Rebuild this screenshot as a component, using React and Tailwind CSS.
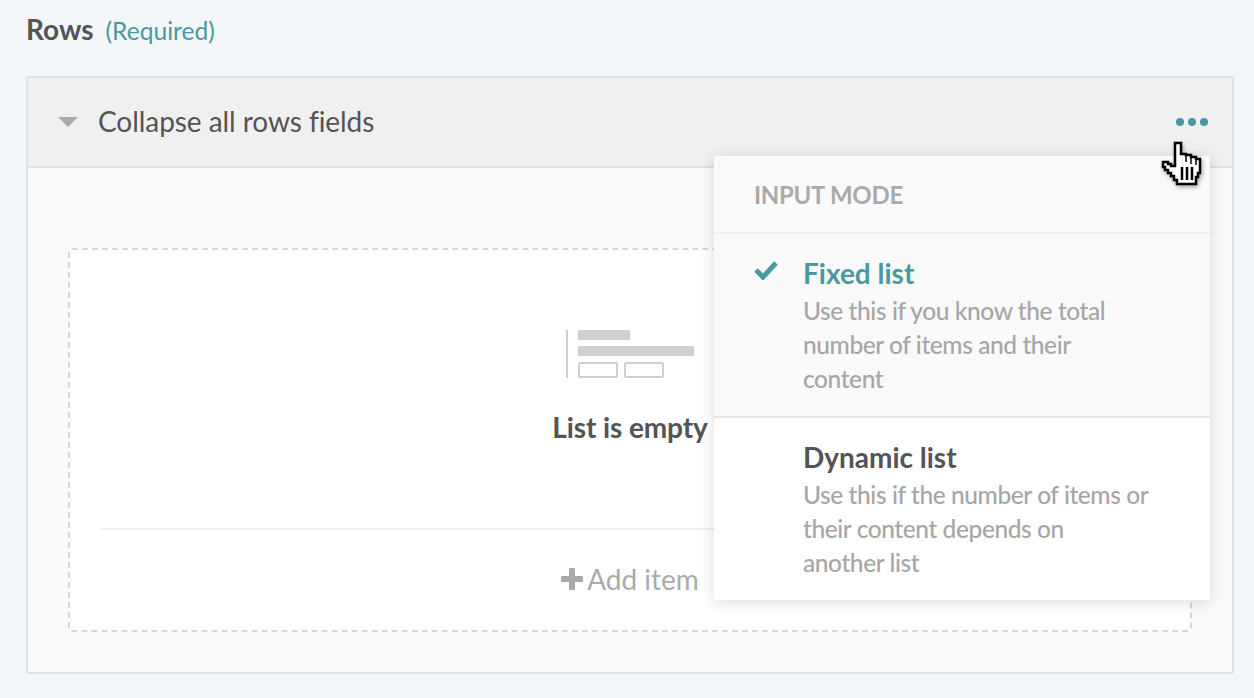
export default function App() {
  const Lato = "font-['Lato',sans-serif]";
  return (
    <div className={`relative h-[698px] w-[1254px] overflow-hidden bg-[#f3f7fa] ${Lato} text-[#545454]`}>
      <div className="flex h-[76px] items-start px-[26px] pt-[10px]">
        <span className="text-[28px] leading-[38px] font-bold">Rows</span>
        <span className="ml-[12px] text-[24.6px] leading-[42px] text-[#4a99a1]">(Required)</span>
      </div>
      <div className="ml-[26px] h-[598px] w-[1208px] rounded-[3px] border-2 border-[#e0e0e0] bg-[#fafafa]">
        <div className="flex h-[90px] items-center border-b-2 border-[#e0e0e0] bg-[#f0f0f0] pl-[30px] pr-[24px]">
          <span className="h-0 w-0 border-x-[10px] border-t-[10px] border-x-transparent border-t-[#aaaaaa]" />
          <span className="ml-[20px] pb-[2px] text-[28px] leading-[38px] tracking-[-0.06px]">Collapse all rows fields</span>
          <span className="ml-auto flex gap-[4px]">
            <i className="block h-[8px] w-[8px] rounded-full bg-[#4a99a1]" />
            <i className="block h-[8px] w-[8px] rounded-full bg-[#4a99a1]" />
            <i className="block h-[8px] w-[8px] rounded-full bg-[#4a99a1]" />
          </span>
        </div>
        <div className="px-[40px] pt-[80px]">
          <div className="h-[384px] rounded-[4px] border-2 border-dashed border-[#d6d6d6] bg-white px-[30px]">
            <div className="flex h-[280px] flex-col items-center border-b-2 border-[#f0f0f0] pt-[80px]">
              <svg width="130" height="50" viewBox="0 0 130 50" className="ml-[2px] block">
                <rect x="0" y="0" width="2" height="48" fill="#d0d0d0" />
                <rect x="12" y="0" width="52" height="10" fill="#d0d0d0" />
                <rect x="12" y="16" width="116" height="10" fill="#d0d0d0" />
                <rect x="13" y="33" width="38" height="14" rx="1" fill="none" stroke="#d0d0d0" strokeWidth="2" />
                <rect x="59" y="33" width="38" height="14" rx="1" fill="none" stroke="#d0d0d0" strokeWidth="2" />
              </svg>
              <div className="mt-[28px] text-[28px] leading-[38px] font-bold tracking-[-0.1px]">List is empty</div>
            </div>
            <div className="flex h-[100px] items-center justify-center pb-[3px] text-[#aaaaaa]">
              <svg width="22" height="22" viewBox="0 0 22 22" className="mr-[4px] block">
                <path d="M11 2v18M2 11h18" stroke="#aaaaaa" strokeWidth="6" strokeLinecap="round" />
              </svg>
              <span className="text-[28px] leading-[38px]">Add item</span>
            </div>
          </div>
        </div>
      </div>

      <div className="absolute left-[714px] top-[156px] w-[496px] bg-white shadow-[0_2px_14px_rgba(0,0,0,0.14)]">
        <div className="flex h-[78px] items-center border-b-2 border-[#f0f0f0] bg-[#fafafa] pt-[2px] pl-[40px] text-[24px] font-bold tracking-[-0.3px] text-[#aaaaaa]">
          INPUT MODE
        </div>
        <div className="flex h-[184px] border-b-2 border-[#e6e6e6] bg-[#fafafa] pt-[20px] pl-[39px]">
          <svg width="26" height="20" viewBox="0 0 26 20" className="mt-[6px] block shrink-0">
            <path d="M3 10l7 7L23 3" fill="none" stroke="#4a99a1" strokeWidth="5" />
          </svg>
          <div className="ml-[24px] w-[340px]">
            <div className="text-[28px] leading-[38px] font-bold text-[#4a99a1]">Fixed list</div>
            <div className="mt-[2px] text-[24.5px] leading-[34px] font-medium tracking-[-0.42px] text-[#a6a6a6]">Use this if you know the total number of items and their content</div>
          </div>
        </div>
        <div className="h-[182px] pt-[20px] pl-[89px]">
          <div className="text-[28px] leading-[38px] font-bold">Dynamic list</div>
          <div className="mt-[2px] w-[360px] text-[24.5px] leading-[34px] font-medium tracking-[-0.42px] text-[#a6a6a6]">Use this if the number of items or<br />their content depends on<br />another list</div>
        </div>
      </div>

      <svg width="44" height="48" viewBox="0 0 44 48" className="absolute left-[1160px] top-[140px] block drop-shadow-[1px_2px_2px_rgba(0,0,0,0.35)]">
        <path d="M15 3h6v11h5v1h5v2h5v2h4v14h-2v4h-2v7H17v-4h-3v-4h-3v-3H8v-3H5v-3H3v-5h5v2h3v2h4z" fill="#fff" stroke="#000" strokeWidth="2.5" />
        <path d="M22 27v13M27 27v13M32 27v13" stroke="#000" strokeWidth="2.5" />
        <path d="M26 16v6M31 18v6M36 20v5" stroke="#000" strokeWidth="1.5" />
      </svg>
    </div>
  );
}
